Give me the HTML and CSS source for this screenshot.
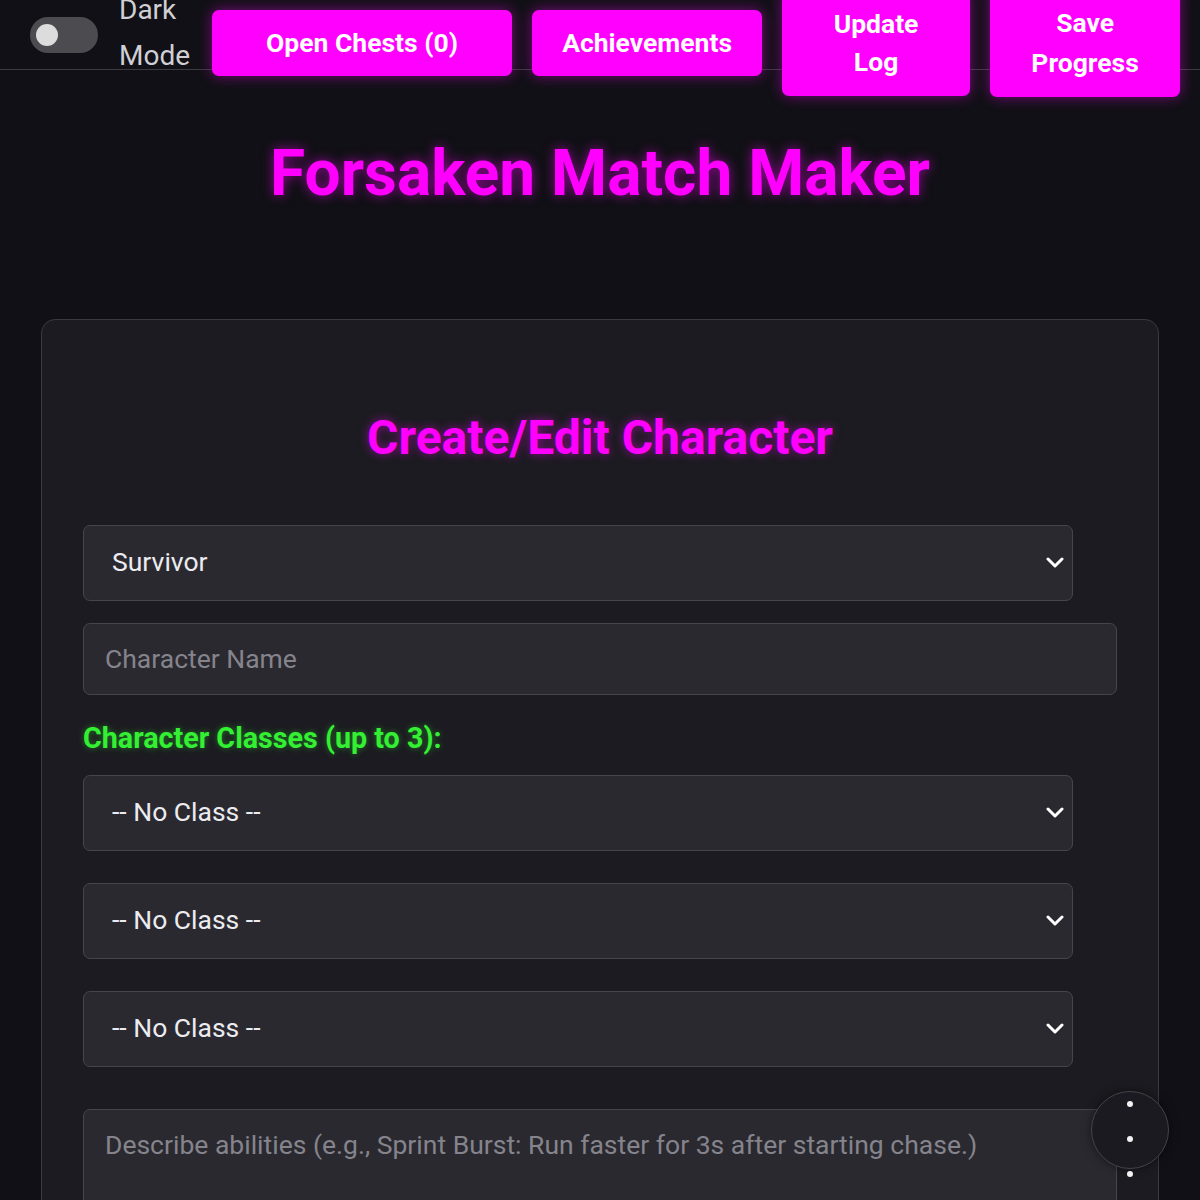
FILE: index.html
```html
<!DOCTYPE html>
<html lang="en">
<head>
<meta charset="utf-8">
<title>Forsaken Match Maker</title>
<link rel="stylesheet" href="styles.css">
</head>
<body>
<header class="topbar">
  <div class="theme">
    <span class="toggle"><span class="knob"></span></span>
    <span class="theme-label">Dark Mode</span>
  </div>
  <div class="actions">
    <button class="btn btn-chests">Open Chests (0)</button>
    <button class="btn btn-ach">Achievements</button>
    <button class="btn btn-log">Update Log</button>
    <button class="btn btn-save">Save Progress</button>
  </div>
</header>

<h1 class="title">Forsaken Match Maker</h1>

<section class="card">
  <h2 class="card-title">Create/Edit Character</h2>
  <div class="select-wrap">
    <select class="field select"><option>Survivor</option></select>
    <svg class="chev" width="18" height="12" viewBox="0 0 18 12"><path d="M2 2 L9 9 L16 2" fill="none" stroke="#fff" stroke-width="3" stroke-linecap="round" stroke-linejoin="round"/></svg>
  </div>
  <input class="field input" type="text" placeholder="Character Name">
  <div class="classes-label">Character Classes (up to 3):</div>
  <div class="select-wrap class-sel">
    <select class="field select"><option>-- No Class --</option></select>
    <svg class="chev" width="18" height="12" viewBox="0 0 18 12"><path d="M2 2 L9 9 L16 2" fill="none" stroke="#fff" stroke-width="3" stroke-linecap="round" stroke-linejoin="round"/></svg>
  </div>
  <div class="select-wrap class-sel">
    <select class="field select"><option>-- No Class --</option></select>
    <svg class="chev" width="18" height="12" viewBox="0 0 18 12"><path d="M2 2 L9 9 L16 2" fill="none" stroke="#fff" stroke-width="3" stroke-linecap="round" stroke-linejoin="round"/></svg>
  </div>
  <div class="select-wrap class-sel last">
    <select class="field select"><option>-- No Class --</option></select>
    <svg class="chev" width="18" height="12" viewBox="0 0 18 12"><path d="M2 2 L9 9 L16 2" fill="none" stroke="#fff" stroke-width="3" stroke-linecap="round" stroke-linejoin="round"/></svg>
  </div>
  <textarea class="field textarea" placeholder="Describe abilities (e.g., Sprint Burst: Run faster for 3s after starting chase.)"></textarea>
</section>

<button class="fab" aria-label="Menu"><span class="dot"></span><span class="dot"></span><span class="dot"></span></button>
</body>
</html>
```
FILE: styles.css
```css
* { box-sizing: border-box; }
html, body { margin: 0; padding: 0; }
body {
  background: #111016;
  color: #e8e8ee;
  font-family: Roboto, "Liberation Sans", Arial, sans-serif;
  height: 1200px;
  overflow: hidden;
}

.topbar {
  height: 70px;
  border-bottom: 1px solid #3a3a40;
  display: flex;
  align-items: center;
  gap: 22px;
  padding: 0 20px 0 30px;
}
.theme {
  display: flex;
  align-items: center;
  gap: 21px;
}
.toggle {
  width: 68px;
  height: 36px;
  border-radius: 18px;
  background: #4c4c50;
  display: flex;
  align-items: center;
  padding-left: 6px;
}
.knob {
  width: 22px;
  height: 22px;
  border-radius: 50%;
  background: #dcdcdc;
}
.theme-label {
  width: min-content;
  font-size: 28px;
  line-height: 46px;
  margin-top: -4px;
  color: #cfcfd4;
}
.actions {
  display: flex;
  align-items: center;
  gap: 20px;
  margin-top: 17px;
}
.btn {
  background: #ff00ff;
  color: #fff;
  border: none;
  border-radius: 7px;
  font-family: Roboto, "Liberation Sans", Arial, sans-serif;
  font-weight: 700;
  font-size: 26.5px;
  line-height: 38.5px;
  padding: 14px 30px;
  box-shadow: 0 0 14px rgba(255, 0, 255, 0.45);
  text-align: center;
}
.btn-chests { width: 300px; }
.btn-ach { width: 230px; }
.btn-log { width: 188px; }
.btn-save { width: 190px; line-height: 40px; }

.title {
  margin: 66px 0 0;
  text-align: center;
  font-size: 64px;
  line-height: 75px;
  font-weight: 700;
  color: #ff00ff;
  text-shadow: 0 0 12px rgba(255, 0, 255, 0.55);
}

.card {
  margin: 108px 41px 0;
  background: #1c1b21;
  border: 1px solid #3a3942;
  border-radius: 14px;
  padding: 90px 41px 40px;
  height: 1000px;
}
.card-title {
  margin: 0 0 60px;
  text-align: center;
  font-size: 48px;
  line-height: 55px;
  font-weight: 700;
  color: #ff00ff;
  text-shadow: 0 0 10px rgba(255, 0, 255, 0.5);
}

.field {
  display: block;
  background: #2a2930;
  border: 1px solid #46454f;
  border-radius: 7px;
  color: #ececf0;
  font-family: Roboto, "Liberation Sans", Arial, sans-serif;
  font-size: 26.5px;
  outline: none;
}
.select-wrap {
  position: relative;
  width: 990px;
  margin-bottom: 22px;
}
.select {
  width: 100%;
  height: 76px;
  padding: 0 60px 3px 28px;
  appearance: none;
  -webkit-appearance: none;
}
.chev {
  position: absolute;
  right: 9px;
  top: 32px;
}
.input {
  width: 100%;
  height: 72px;
  padding: 0 21px 2px;
}
.input::placeholder, .textarea::placeholder { color: #85848c; }

.classes-label {
  margin: 27px 0 21px;
  font-size: 28.7px;
  line-height: 32px;
  font-weight: 700;
  color: #33f033;
  text-shadow: 0 0 6px rgba(51, 240, 51, 0.45);
}
.class-sel { margin-bottom: 32px; }
.class-sel.last { margin-bottom: 42px; }

.textarea {
  width: 100%;
  height: 140px;
  padding: 18px 21px;
  line-height: 34px;
  resize: none;
}

.fab {
  position: fixed;
  right: 31px;
  bottom: 31px;
  width: 78px;
  height: 78px;
  border-radius: 50%;
  background: #1b1a20;
  border: 1px solid #45444d;
  box-shadow: 0 0 10px rgba(0, 0, 0, 0.5);
  padding: 0;
  display: flex;
  flex-direction: column;
  align-items: center;
  justify-content: flex-start;
  gap: 29px;
  padding-top: 9px;
}
.dot {
  width: 6px;
  height: 6px;
  border-radius: 50%;
  background: #f2f2f2;
  flex: none;
}
```
